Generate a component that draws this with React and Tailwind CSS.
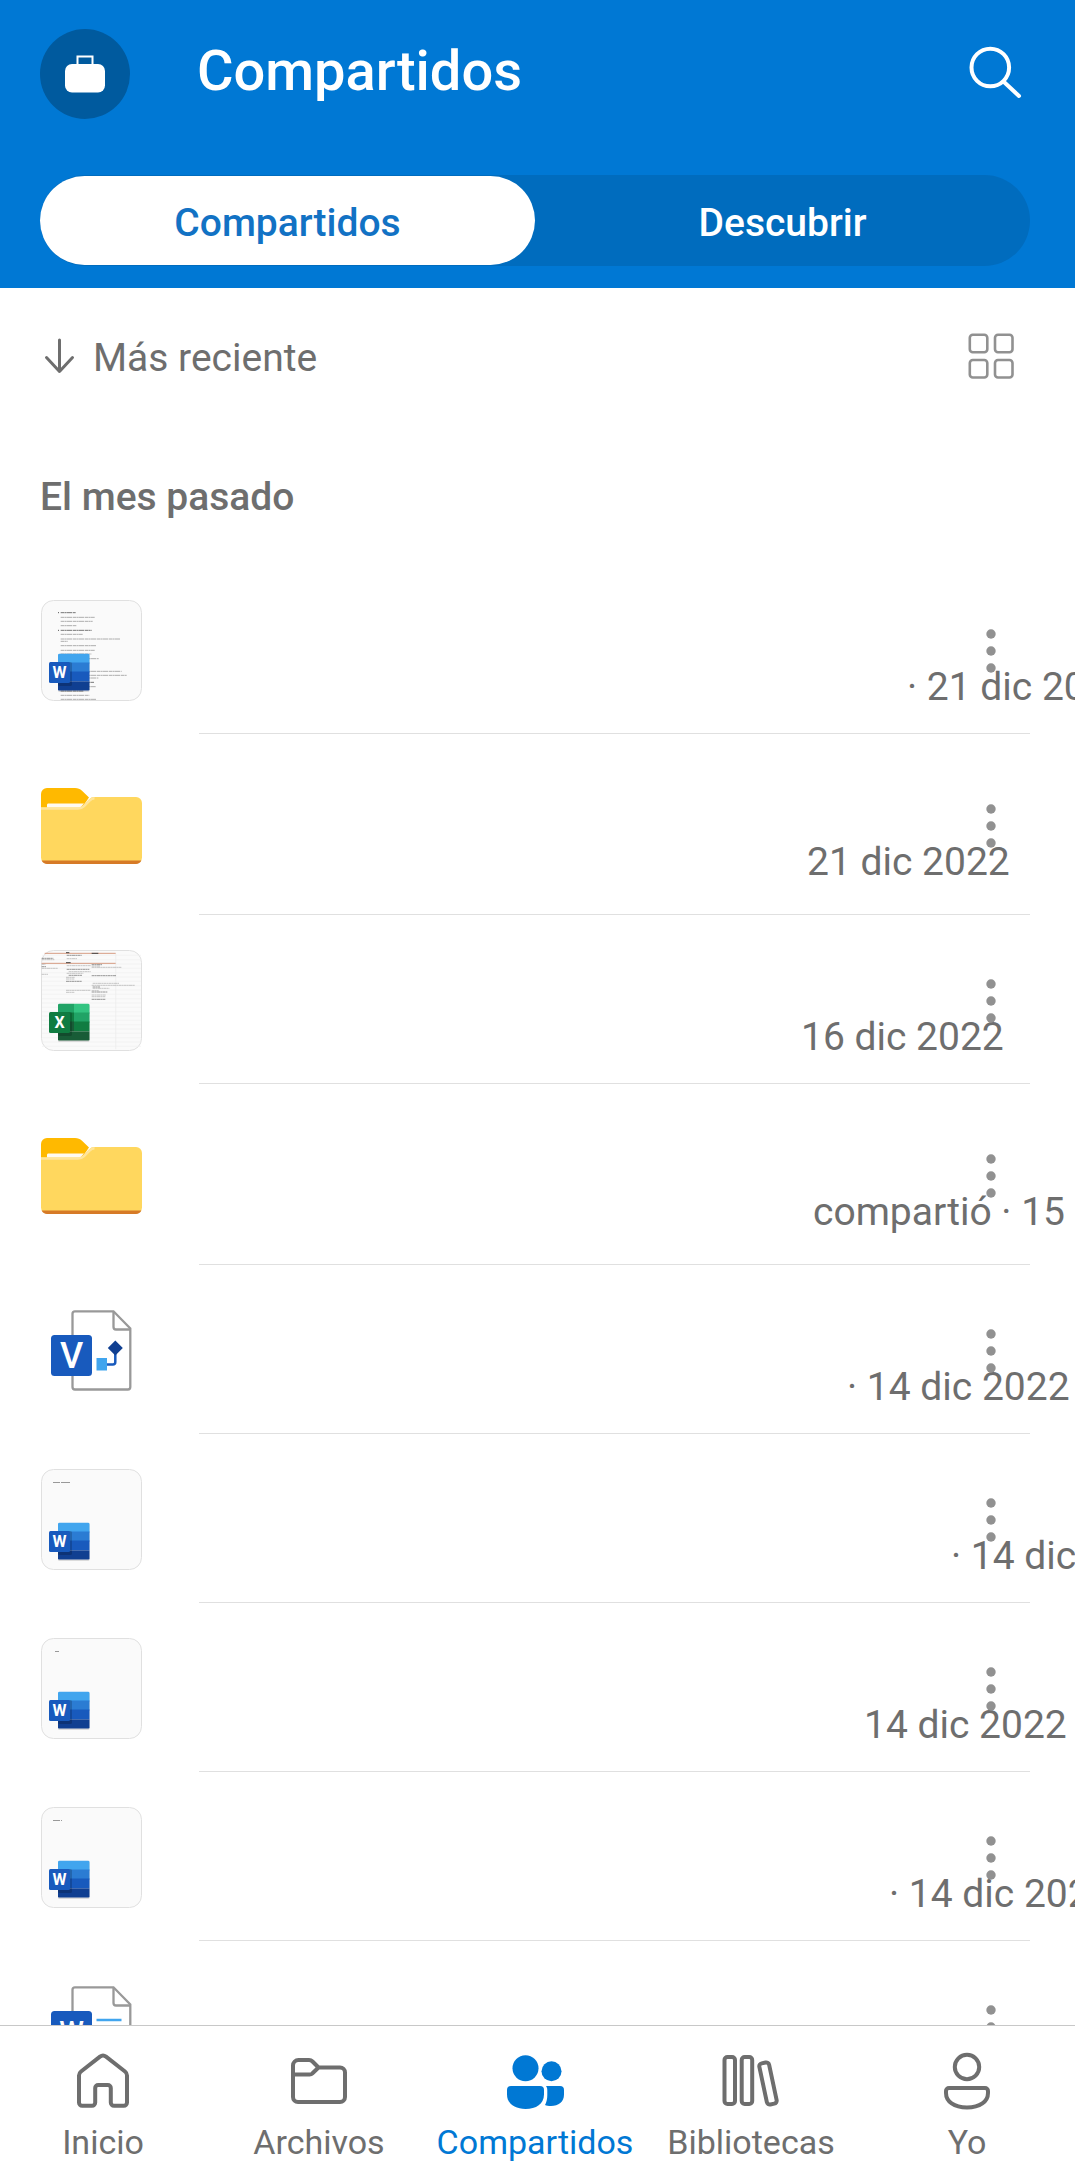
import React, { useState } from "react";

const WORD_COLORS = {
  cells: [
    [17, 54, 32, 10, "#41a5ee"],
    [17, 63, 32, 10, "#2b7cd3"],
    [17, 72, 32, 10, "#185abd"],
    [17, 82, 32, 9, "#103f91"],
  ],
  tile: "#185abd",
  letter: "W",
};

const EXCEL_COLORS = {
  cells: [
    [17, 54, 16, 10, "#21a366"],
    [33, 54, 16, 10, "#33c481"],
    [17, 63, 16, 10, "#107c41"],
    [33, 63, 16, 10, "#21a366"],
    [17, 72, 16, 10, "#185c37"],
    [33, 72, 16, 10, "#107c41"],
    [17, 82, 32, 9, "#185c37"],
  ],
  tile: "#107c41",
  letter: "X",
};

function AppBadge({ id, app }) {
  return (
    <g>
      <clipPath id={id}>
        <rect x="17" y="53.500" width="31.5" height="37.5" rx="1.5" />
      </clipPath>
      <rect x="17" y="54.500" width="31.5" height="37.5" rx="1.5" fill="#000" opacity="0.12" />
      <g clipPath={`url(#${id})`}>
        {app.cells.map(([x, y, w, h, fill]) => (
          <rect key={`${x}-${y}`} x={x} y={y - 0.5} width={w} height={h} fill={fill} />
        ))}
        <rect x="17" y="62" width="14" height="24" rx="1.5" fill="#000" opacity="0.18" />
      </g>
      <rect x="8" y="62" width="21" height="21" rx="1.5" fill={app.tile} />
      <text x="18.5" y="78" textAnchor="middle" fontFamily="Roboto, sans-serif" fontWeight="700" fontSize="16" fill="#fff">
        {app.letter}
      </text>
    </g>
  );
}

function Thumb({ id, app, children }) {
  return (
    <svg viewBox="0 0 101 101" className="size-[101px]" aria-hidden="true">
      <rect x="0.5" y="0.5" width="100" height="100" rx="12" fill="#fafafa" stroke="#e0e0e0" />
      {children}
      <AppBadge id={id} app={app} />
    </svg>
  );
}

// Each entry: start x, y, end x, and 1 for a bold line
const TEXT_LINES = [
  [92, 68, 137, 1], [92, 82, 194], [92, 94, 188], [92, 107, 140],
  [92, 121, 185, 1], [92, 133, 158], [92, 147, 272], [92, 154, 113],
  [92, 167, 200], [92, 181, 194], [92, 192, 184], [92, 206, 206],
  [92, 244, 275], [92, 256, 290], [92, 264, 205], [92, 277, 192, 1],
  [92, 290, 197], [92, 303, 160, 1], [92, 316, 178], [92, 328, 200],
];

function TextPage() {
  return (
    <svg viewBox="33 30 303 303" width="101" height="101">
      {TEXT_LINES.map(([a, y, b, strong]) => (
        <line key={y} x1={a} x2={b} y1={y} y2={y} stroke={strong ? "#555" : "#9a9a9a"} strokeWidth="2.4" strokeDasharray="11 1 6 1 15 2" />
      ))}
      <path d="M84 68h3M84 121h3" stroke="#555" strokeWidth="3" />
    </svg>
  );
}

const SHEET_LINES = [
  [65, 655, 100], [65, 659, 103], [65, 673, 76], [65, 680, 78], [65, 685, 114], [65, 703, 84],
  [140, 646, 185], [140, 656, 172], [140, 677, 212], [140, 688, 208], [146, 695, 212],
  [140, 700, 190], [146, 706, 186], [138, 712, 165], [138, 717, 163], [138, 724, 186],
  [138, 751, 212], [138, 757, 164], [215, 674, 246], [215, 678, 240], [215, 682, 305],
  [215, 707, 288], [218, 730, 298], [215, 736, 345], [218, 741, 240], [218, 745, 268],
  [215, 752, 236], [215, 756, 262], [215, 765, 258], [215, 770, 256], [215, 778, 256],
];

function SheetPage() {
  return (
    <svg viewBox="63 630 303 303" width="101" height="101">
      {Array.from({ length: 22 }, (_, i) => (
        <line key={i} x1="66" x2="363" y1={646 + i * 13} y2={646 + i * 13} stroke="#f0f0f0" strokeWidth="2" />
      ))}
      <path d="M287 640v288" stroke="#ececec" strokeWidth="2" />
      <path d="M74 640h213M65 670h222" stroke="#d08a6c" strokeWidth="2.5" />
      <path d="M138 638h10M215 640h20M138 668h14" stroke="#444" strokeWidth="3" />
      {SHEET_LINES.map(([a, y, b], i) => (
        <line key={`${a}-${y}`} x1={a} x2={b} y1={y} y2={y} stroke={i % 3 ? "#aaa" : "#666"} strokeWidth="2" strokeDasharray="9 1 5 1" />
      ))}
    </svg>
  );
}

function FolderArt() {
  return (
    <svg viewBox="0 0 101 101" className="size-[101px]" aria-hidden="true">
      <path d="M0 34V19a6 6 0 0 1 6-6h28c3 0 5 .8 7 2.800L48 22.500 40 34Z" fill="#ffb900" />
      <path d="M6 34v-4c0-1 .6-1.500 1.500-1.500H43L38 34Z" fill="#fffaf0" />
      <path d="M0 32.500h37c2 0 3.500-.6 5-2l6-6c1.600-1.700 3-2.500 5-2.500h42a6 6 0 0 1 6 6v54.500a6 6 0 0 1-6 6H6a6 6 0 0 1-6-6Z" fill="#ffd75e" />
      <path d="M0 33.500h37c2.500 0 4.300-.7 6-2.400l5.500-5.500c1.500-1.500 2.800-2.300 5-2.300" fill="none" stroke="#ffe59a" strokeWidth="2.500" />
      <path d="M.6 85.500h99.800a6 6 0 0 1-5.400 3.400H6a6 6 0 0 1-5.400-3.400Z" fill="#d67a27" />
    </svg>
  );
}

function PageIcon({ letter, size, baseline, children }) {
  return (
    <svg viewBox="0 0 101 101" className="size-[101px]" aria-hidden="true">
      <path d="M34 11.300h38.500L89.300 28.500V87a2.500 2.500 0 0 1-2.500 2.500H34A2.500 2.500 0 0 1 31.500 87V13.800A2.500 2.500 0 0 1 34 11.300Z" fill="#fff" stroke="#999" strokeWidth="2.300" />
      <path d="M72.500 12v15a2.500 2.500 0 0 0 2.500 2.500h14" fill="none" stroke="#999" strokeWidth="2.300" />
      {children}
      <rect x="10" y="35" width="41" height="41" rx="3.500" fill="#185abd" />
      <text x="30.500" y={baseline} textAnchor="middle" fontFamily="Roboto, sans-serif" fontWeight="500" fontSize={size} fill="#fff">
        {letter}
      </text>
    </svg>
  );
}

function VisioArt() {
  return (
    <PageIcon letter="V" size="36" baseline="68">
      <path d="M74.300 50v12a2.500 2.500 0 0 1-2.500 2.500H64" fill="none" stroke="#185abd" strokeWidth="2.500" />
      <rect x="55.500" y="58" width="10.500" height="12.500" fill="#41a5ee" />
      <path d="M74.300 40.500l7.500 7.500-7.500 7.500-7.500-7.500Z" fill="#103f91" />
    </PageIcon>
  );
}

function WordFileArt() {
  return (
    <PageIcon letter="W" size="28" baseline="65">
      <path d="M55.500 44h25" stroke="#41a5ee" strokeWidth="2.500" />
      <path d="M55.500 55h25" stroke="#2b7cd3" strokeWidth="2.500" />
      <path d="M55.500 66h25" stroke="#103f91" strokeWidth="2.500" />
    </PageIcon>
  );
}

function Scribble({ d }) {
  return <path d={d} stroke="#999" strokeWidth="1" strokeDasharray="7 1 9 1" />;
}

const ITEMS = [
  { art: <Thumb id="b1" app={WORD_COLORS}><TextPage /></Thumb>, text: "· 21 dic 20", indent: "pl-[708px]" },
  { art: <FolderArt />, text: "21 dic 2022", indent: "pl-[608px]", folder: true },
  { art: <Thumb id="b3" app={EXCEL_COLORS}><SheetPage /></Thumb>, text: "16 dic 2022", indent: "pl-[602px]" },
  { art: <FolderArt />, text: "compartió · 15", indent: "pl-[614px]", folder: true },
  { art: <VisioArt />, text: "· 14 dic 2022", indent: "pl-[648px]" },
  { art: <Thumb id="b6" app={WORD_COLORS}><Scribble d="M12 13.500h17" /></Thumb>, text: "· 14 dic", indent: "pl-[752px]" },
  { art: <Thumb id="b7" app={WORD_COLORS}><Scribble d="M14 13.500h4" /></Thumb>, text: "14 dic 2022", indent: "pl-[665px]" },
  { art: <Thumb id="b8" app={WORD_COLORS}><Scribble d="M12 13.500h9" /></Thumb>, text: "· 14 dic 202", indent: "pl-[690px]" },
  { art: <WordFileArt />, text: "", indent: "" },
];

function Row({ item }) {
  const { art, text, indent, folder } = item;
  return (
    <li className="flex pr-[45px] pl-[41px]">
      <div className={folder ? "shrink-0 pt-[41px] pb-[39px]" : "shrink-0 pt-[35px] pb-[33px]"}>{art}</div>
      <div className="ml-[57px] flex min-w-0 flex-1 border-b border-[#e0e0e0]">
        <p className={`w-0 flex-1 self-end text-[39px] leading-[48px] whitespace-nowrap ${folder ? "pb-7" : "pb-[22px]"} ${indent}`}>
          {text}
        </p>
        <button aria-label="Más opciones" className={`mr-[15px] flex h-12 w-12 shrink-0 items-center justify-center ${folder ? "mt-[68px]" : "mt-[62px]"}`}>
          <svg viewBox="0 0 12 48" className="h-12 w-3" fill="#919191">
            <circle cx="6" cy="7" r="4.700" />
            <circle cx="6" cy="24" r="4.700" />
            <circle cx="6" cy="41" r="4.700" />
          </svg>
        </button>
      </div>
    </li>
  );
}

const NAV = [
  {
    label: "Inicio",
    icon: <path d="M27 5.600a5 5 0 0 1 6 0L52 20.500a5 5 0 0 1 2 4V51.500a3.200 3.200 0 0 1-3.200 3.200H41a3.200 3.200 0 0 1-3.200-3.200V37a3 3 0 0 0-3-3H25.200a3 3 0 0 0-3 3V51.500A3.200 3.200 0 0 1 19 54.700H9.200A3.200 3.200 0 0 1 6 51.500V24.500a5 5 0 0 1 2-4Z" />,
  },
  {
    label: "Archivos",
    icon: <path d="M4 14.500A5.500 5.500 0 0 1 9.500 9H20a5 5 0 0 1 3.500 1.500L29.500 16.500H51a5 5 0 0 1 5 5V46a5 5 0 0 1-5 5H9a5 5 0 0 1-5-5ZM4 23.500H20.500a4 4 0 0 0 3-1.200L29.500 16.500" />,
  },
  {
    label: "Compartidos",
    active: true,
    icon: (
      <g fill="#0078d4" stroke="none">
        <circle cx="20.500" cy="17.300" r="13" />
        <circle cx="46.500" cy="20.300" r="10" />
        <path d="M6 35H35a4 4 0 0 1 4 4v4.500C39 53 31 58 20.500 58S2 53 2 43.500V39a4 4 0 0 1 4-4Z" />
        <path d="M41 35H55a4 4 0 0 1 4 4v4.500C59 51 53.500 55 46 55c-2.500 0-4.500-.3-6-1 1.500-2.600 2.300-6 2.300-10V39.500C42.300 37.500 42 36.200 41 35Z" />
      </g>
    ),
  },
  {
    label: "Bibliotecas",
    icon: (
      <g>
        <rect x="3.500" y="6" width="10.500" height="47" rx="3" />
        <rect x="20.700" y="6" width="10.500" height="47" rx="3" />
        <rect x="42" y="11.500" width="10" height="42" rx="3" transform="rotate(-12 47 32.500)" />
      </g>
    ),
  },
  {
    label: "Yo",
    icon: (
      <g>
        <circle cx="30" cy="16" r="12.200" />
        <path d="M12 37H48a3 3 0 0 1 3 3v2C51 50.500 43 56.500 30 56.500S9 50.500 9 42V40a3 3 0 0 1 3-3Z" />
      </g>
    ),
  },
];

export default function App() {
  const [tab, setTab] = useState("Compartidos");
  return (
    <div className="flex h-screen flex-col overflow-hidden bg-white font-[Roboto,sans-serif] text-[#6e6e6e]">
      <header className="shrink-0 bg-[#0078d4] pt-[29px] pr-[45px] pb-[22px] pl-10 text-white">
        <div className="flex items-center">
          <button aria-label="Cuenta" className="flex size-[90px] items-center justify-center rounded-full bg-[#005a9e]">
            <svg viewBox="0 0 40 38" className="h-[38px] w-10">
              <path d="M12.500 10V1.500h15V10" fill="none" stroke="#fff" strokeWidth="2" />
              <rect x="0" y="9" width="40" height="28.500" rx="7" fill="#fff" />
            </svg>
          </button>
          <h1 className="ml-[67px] flex-1 pb-1.5 text-[56px] leading-[66px] font-medium">Compartidos</h1>
          <button aria-label="Buscar" className="mr-[5px]">
            <svg viewBox="0 0 60 60" className="size-[60px]" fill="none" stroke="#fff" strokeWidth="4" strokeLinecap="round">
              <circle cx="25.300" cy="23.500" r="18.800" />
              <path d="M39 38 54 52" />
            </svg>
          </button>
        </div>
        <div role="tablist" className="mt-14 grid h-[91px] grid-cols-2 rounded-full bg-[#006cbe] py-px">
          {["Compartidos", "Descubrir"].map((name) => (
            <button
              key={name}
              role="tab"
              aria-selected={tab === name}
              onClick={() => setTab(name)}
              className={`rounded-full pt-1 text-[39px] leading-[48px] font-medium ${tab === name ? "bg-white text-[#1272c4]" : "text-white"}`}
            >
              {name}
            </button>
          ))}
        </div>
      </header>

      <main className="min-h-0 flex-1 overflow-hidden">
        <div className="flex items-center justify-between pt-[42px] pr-[60px] pl-[41px]">
          <button className="flex items-center gap-4 text-[39px] leading-[48px]">
            <svg viewBox="0 0 36 36" className="size-9" fill="none" stroke="#6e6e6e" strokeWidth="3" strokeLinecap="round" strokeLinejoin="round">
              <path d="M18.500 2v31M5.500 19.500 18.500 33.500 31.500 19.500" />
            </svg>
            <span className="pt-1">Más reciente</span>
          </button>
          <button aria-label="Vista de cuadrícula">
            <svg viewBox="0 0 48 48" className="size-12" fill="none" stroke="#919191" strokeWidth="2.600">
              <rect x="2.800" y="2.800" width="17.500" height="17.500" rx="3" />
              <rect x="28" y="2.800" width="17.500" height="17.500" rx="3" />
              <rect x="2.800" y="28" width="17.500" height="17.500" rx="3" />
              <rect x="28" y="28" width="17.500" height="17.500" rx="3" />
            </svg>
          </button>
        </div>
        <h2 className="mt-[91px] mb-11 pl-10 text-[39px] leading-[48px] font-medium">El mes pasado</h2>
        <ul>
          {ITEMS.map((item, i) => (
            <Row key={i} item={item} />
          ))}
        </ul>
      </main>

      <nav className="grid shrink-0 grid-cols-5 gap-[22px] border-t border-[#c8c8c8] bg-white pt-[25px] pr-[11px] pb-3.5 pl-1.5">
        {NAV.map(({ label, icon, active }) => (
          <a
            key={label}
            href="#"
            aria-current={active ? "page" : undefined}
            className={`flex flex-col items-center gap-2.5 text-[34px] leading-[42px] ${active ? "text-[#0078d4]" : "text-[#6e6e6e]"}`}
          >
            <svg viewBox="0 0 60 60" className="size-[60px]" fill="none" stroke="#6e6e6e" strokeWidth="4" strokeLinejoin="round">
              {icon}
            </svg>
            {label}
          </a>
        ))}
      </nav>
    </div>
  );
}
